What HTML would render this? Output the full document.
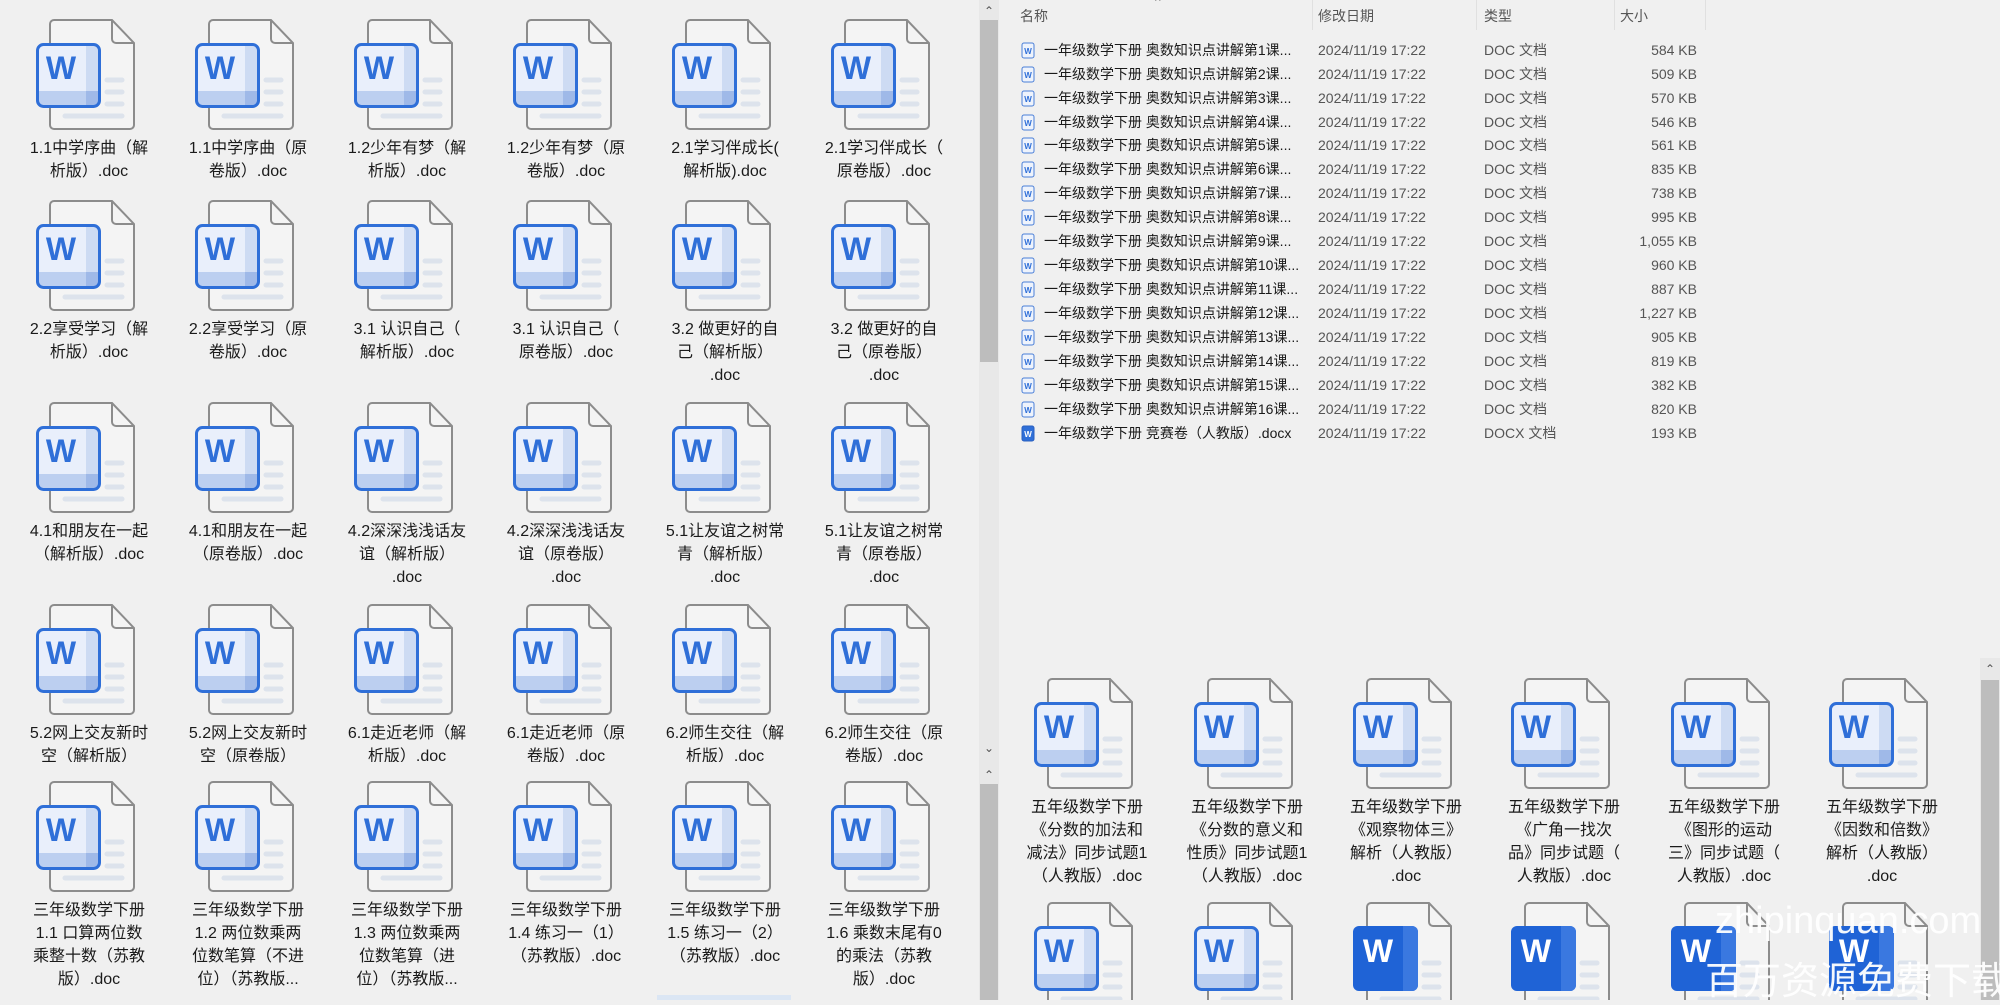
<!DOCTYPE html>
<html><head><meta charset="utf-8">
<style>
*{margin:0;padding:0;box-sizing:border-box}
body{width:2000px;height:1000px;overflow:hidden;background:#f0f0f0;font-family:"Liberation Sans","Noto Sans CJK SC",sans-serif;color:#1a1a1a;position:relative}
.pane{position:absolute;overflow:hidden;background:#f0f0f0}
.it{position:absolute;width:160px}
.it svg{position:absolute;left:27px;top:0}
.lb{position:absolute;top:118px;left:0;width:160px;text-align:center;font-size:16px;line-height:23px;white-space:nowrap;color:#1a1a1a}
.sb{position:absolute;background:#e6e6e6}
.row{position:absolute;left:0;height:24px;font-size:14px;line-height:24px;white-space:nowrap}
.row .n{position:absolute;left:1044px}
.row .d{position:absolute;left:1318px;color:#555}
.row .t{position:absolute;left:1484px;color:#555}
.row .s{position:absolute;right:303px;color:#555}
.row .ic{position:absolute;left:1021px;top:4px}
.wm{position:absolute;color:#fff;font-size:36px;white-space:nowrap;opacity:.95}
</style></head><body>
<svg width="0" height="0" style="position:absolute">
<defs>
<g id="pg">
<path d="M18,1 H76 L98,24 V106 a4,4 0 0 1 -4,4 H18 a4,4 0 0 1 -4,-4 V5 a4,4 0 0 1 4,-4Z" fill="#f4f4f4" stroke="#8c8c8c" stroke-width="2"/>
<path d="M76,1 V20 a4,4 0 0 0 4,4 H98" fill="none" stroke="#8c8c8c" stroke-width="2"/>
<g stroke="#dde3ec" stroke-width="5" stroke-linecap="round"><line x1="71" y1="61" x2="86" y2="61"/><line x1="71" y1="73" x2="86" y2="73"/><line x1="71" y1="85" x2="86" y2="85"/><line x1="29" y1="97" x2="86" y2="97"/></g>
</g>
<g id="bx">
<rect x="1.5" y="25.5" width="62" height="62" rx="6" fill="#e9effb"/>
<path d="M50,26 H58 a5,5 0 0 1 5,5 V72 H50Z" fill="#cddbf3"/>
<path d="M2,72 H63 V82 a5,5 0 0 1 -5,5 H7 a5,5 0 0 1 -5,-5Z" fill="#bccff0"/>
<path d="M50,72 H63 V82 a5,5 0 0 1 -5,5 H50Z" fill="#9fb9e8"/>
<rect x="1.5" y="25.5" width="62" height="62" rx="6" fill="none" stroke="#2f6fd8" stroke-width="3"/>
</g>
<g id="bs">
<rect x="0" y="24" width="65" height="65" rx="6" fill="#1f63d6"/>
<path d="M50,24 H59 a6,6 0 0 1 6,6 V83 a6,6 0 0 1 -6,6 H50Z" fill="#3a78e0"/>
</g>
</defs></svg>

<!-- LEFT TOP PANE -->
<div class="pane" style="left:0;top:0;width:979px;height:762px">
<div class="it" style="left:9px;top:19px"><svg width="100" height="112"><use href="#pg"/><use href="#bx"/><text x="25" y="60" text-anchor="middle" font-family="Liberation Sans" font-weight="bold" font-size="32" fill="#2f6fd8">W</text></svg><div class="lb">1.1中学序曲（解<br>析版）.doc</div></div>
<div class="it" style="left:168px;top:19px"><svg width="100" height="112"><use href="#pg"/><use href="#bx"/><text x="25" y="60" text-anchor="middle" font-family="Liberation Sans" font-weight="bold" font-size="32" fill="#2f6fd8">W</text></svg><div class="lb">1.1中学序曲（原<br>卷版）.doc</div></div>
<div class="it" style="left:327px;top:19px"><svg width="100" height="112"><use href="#pg"/><use href="#bx"/><text x="25" y="60" text-anchor="middle" font-family="Liberation Sans" font-weight="bold" font-size="32" fill="#2f6fd8">W</text></svg><div class="lb">1.2少年有梦（解<br>析版）.doc</div></div>
<div class="it" style="left:486px;top:19px"><svg width="100" height="112"><use href="#pg"/><use href="#bx"/><text x="25" y="60" text-anchor="middle" font-family="Liberation Sans" font-weight="bold" font-size="32" fill="#2f6fd8">W</text></svg><div class="lb">1.2少年有梦（原<br>卷版）.doc</div></div>
<div class="it" style="left:645px;top:19px"><svg width="100" height="112"><use href="#pg"/><use href="#bx"/><text x="25" y="60" text-anchor="middle" font-family="Liberation Sans" font-weight="bold" font-size="32" fill="#2f6fd8">W</text></svg><div class="lb">2.1学习伴成长(<br>解析版).doc</div></div>
<div class="it" style="left:804px;top:19px"><svg width="100" height="112"><use href="#pg"/><use href="#bx"/><text x="25" y="60" text-anchor="middle" font-family="Liberation Sans" font-weight="bold" font-size="32" fill="#2f6fd8">W</text></svg><div class="lb">2.1学习伴成长（<br>原卷版）.doc</div></div>
<div class="it" style="left:9px;top:200px"><svg width="100" height="112"><use href="#pg"/><use href="#bx"/><text x="25" y="60" text-anchor="middle" font-family="Liberation Sans" font-weight="bold" font-size="32" fill="#2f6fd8">W</text></svg><div class="lb">2.2享受学习（解<br>析版）.doc</div></div>
<div class="it" style="left:168px;top:200px"><svg width="100" height="112"><use href="#pg"/><use href="#bx"/><text x="25" y="60" text-anchor="middle" font-family="Liberation Sans" font-weight="bold" font-size="32" fill="#2f6fd8">W</text></svg><div class="lb">2.2享受学习（原<br>卷版）.doc</div></div>
<div class="it" style="left:327px;top:200px"><svg width="100" height="112"><use href="#pg"/><use href="#bx"/><text x="25" y="60" text-anchor="middle" font-family="Liberation Sans" font-weight="bold" font-size="32" fill="#2f6fd8">W</text></svg><div class="lb">3.1 认识自己（<br>解析版）.doc</div></div>
<div class="it" style="left:486px;top:200px"><svg width="100" height="112"><use href="#pg"/><use href="#bx"/><text x="25" y="60" text-anchor="middle" font-family="Liberation Sans" font-weight="bold" font-size="32" fill="#2f6fd8">W</text></svg><div class="lb">3.1 认识自己（<br>原卷版）.doc</div></div>
<div class="it" style="left:645px;top:200px"><svg width="100" height="112"><use href="#pg"/><use href="#bx"/><text x="25" y="60" text-anchor="middle" font-family="Liberation Sans" font-weight="bold" font-size="32" fill="#2f6fd8">W</text></svg><div class="lb">3.2 做更好的自<br>己（解析版）<br>.doc</div></div>
<div class="it" style="left:804px;top:200px"><svg width="100" height="112"><use href="#pg"/><use href="#bx"/><text x="25" y="60" text-anchor="middle" font-family="Liberation Sans" font-weight="bold" font-size="32" fill="#2f6fd8">W</text></svg><div class="lb">3.2 做更好的自<br>己（原卷版）<br>.doc</div></div>
<div class="it" style="left:9px;top:402px"><svg width="100" height="112"><use href="#pg"/><use href="#bx"/><text x="25" y="60" text-anchor="middle" font-family="Liberation Sans" font-weight="bold" font-size="32" fill="#2f6fd8">W</text></svg><div class="lb">4.1和朋友在一起<br>（解析版）.doc</div></div>
<div class="it" style="left:168px;top:402px"><svg width="100" height="112"><use href="#pg"/><use href="#bx"/><text x="25" y="60" text-anchor="middle" font-family="Liberation Sans" font-weight="bold" font-size="32" fill="#2f6fd8">W</text></svg><div class="lb">4.1和朋友在一起<br>（原卷版）.doc</div></div>
<div class="it" style="left:327px;top:402px"><svg width="100" height="112"><use href="#pg"/><use href="#bx"/><text x="25" y="60" text-anchor="middle" font-family="Liberation Sans" font-weight="bold" font-size="32" fill="#2f6fd8">W</text></svg><div class="lb">4.2深深浅浅话友<br>谊（解析版）<br>.doc</div></div>
<div class="it" style="left:486px;top:402px"><svg width="100" height="112"><use href="#pg"/><use href="#bx"/><text x="25" y="60" text-anchor="middle" font-family="Liberation Sans" font-weight="bold" font-size="32" fill="#2f6fd8">W</text></svg><div class="lb">4.2深深浅浅话友<br>谊（原卷版）<br>.doc</div></div>
<div class="it" style="left:645px;top:402px"><svg width="100" height="112"><use href="#pg"/><use href="#bx"/><text x="25" y="60" text-anchor="middle" font-family="Liberation Sans" font-weight="bold" font-size="32" fill="#2f6fd8">W</text></svg><div class="lb">5.1让友谊之树常<br>青（解析版）<br>.doc</div></div>
<div class="it" style="left:804px;top:402px"><svg width="100" height="112"><use href="#pg"/><use href="#bx"/><text x="25" y="60" text-anchor="middle" font-family="Liberation Sans" font-weight="bold" font-size="32" fill="#2f6fd8">W</text></svg><div class="lb">5.1让友谊之树常<br>青（原卷版）<br>.doc</div></div>
<div class="it" style="left:9px;top:604px"><svg width="100" height="112"><use href="#pg"/><use href="#bx"/><text x="25" y="60" text-anchor="middle" font-family="Liberation Sans" font-weight="bold" font-size="32" fill="#2f6fd8">W</text></svg><div class="lb">5.2网上交友新时<br>空（解析版）</div></div>
<div class="it" style="left:168px;top:604px"><svg width="100" height="112"><use href="#pg"/><use href="#bx"/><text x="25" y="60" text-anchor="middle" font-family="Liberation Sans" font-weight="bold" font-size="32" fill="#2f6fd8">W</text></svg><div class="lb">5.2网上交友新时<br>空（原卷版）</div></div>
<div class="it" style="left:327px;top:604px"><svg width="100" height="112"><use href="#pg"/><use href="#bx"/><text x="25" y="60" text-anchor="middle" font-family="Liberation Sans" font-weight="bold" font-size="32" fill="#2f6fd8">W</text></svg><div class="lb">6.1走近老师（解<br>析版）.doc</div></div>
<div class="it" style="left:486px;top:604px"><svg width="100" height="112"><use href="#pg"/><use href="#bx"/><text x="25" y="60" text-anchor="middle" font-family="Liberation Sans" font-weight="bold" font-size="32" fill="#2f6fd8">W</text></svg><div class="lb">6.1走近老师（原<br>卷版）.doc</div></div>
<div class="it" style="left:645px;top:604px"><svg width="100" height="112"><use href="#pg"/><use href="#bx"/><text x="25" y="60" text-anchor="middle" font-family="Liberation Sans" font-weight="bold" font-size="32" fill="#2f6fd8">W</text></svg><div class="lb">6.2师生交往（解<br>析版）.doc</div></div>
<div class="it" style="left:804px;top:604px"><svg width="100" height="112"><use href="#pg"/><use href="#bx"/><text x="25" y="60" text-anchor="middle" font-family="Liberation Sans" font-weight="bold" font-size="32" fill="#2f6fd8">W</text></svg><div class="lb">6.2师生交往（原<br>卷版）.doc</div></div>
</div>

<!-- LEFT BOTTOM PANE -->
<div class="pane" style="left:0;top:762px;width:979px;height:238px">
<div class="it" style="left:9px;top:19px"><svg width="100" height="112"><use href="#pg"/><use href="#bx"/><text x="25" y="60" text-anchor="middle" font-family="Liberation Sans" font-weight="bold" font-size="32" fill="#2f6fd8">W</text></svg><div class="lb">三年级数学下册<br>1.1 口算两位数<br>乘整十数（苏教<br>版）.doc</div></div>
<div class="it" style="left:168px;top:19px"><svg width="100" height="112"><use href="#pg"/><use href="#bx"/><text x="25" y="60" text-anchor="middle" font-family="Liberation Sans" font-weight="bold" font-size="32" fill="#2f6fd8">W</text></svg><div class="lb">三年级数学下册<br>1.2 两位数乘两<br>位数笔算（不进<br>位）（苏教版...</div></div>
<div class="it" style="left:327px;top:19px"><svg width="100" height="112"><use href="#pg"/><use href="#bx"/><text x="25" y="60" text-anchor="middle" font-family="Liberation Sans" font-weight="bold" font-size="32" fill="#2f6fd8">W</text></svg><div class="lb">三年级数学下册<br>1.3 两位数乘两<br>位数笔算（进<br>位）（苏教版...</div></div>
<div class="it" style="left:486px;top:19px"><svg width="100" height="112"><use href="#pg"/><use href="#bx"/><text x="25" y="60" text-anchor="middle" font-family="Liberation Sans" font-weight="bold" font-size="32" fill="#2f6fd8">W</text></svg><div class="lb">三年级数学下册<br>1.4 练习一（1）<br>（苏教版）.doc</div></div>
<div class="it" style="left:645px;top:19px"><svg width="100" height="112"><use href="#pg"/><use href="#bx"/><text x="25" y="60" text-anchor="middle" font-family="Liberation Sans" font-weight="bold" font-size="32" fill="#2f6fd8">W</text></svg><div class="lb">三年级数学下册<br>1.5 练习一（2）<br>（苏教版）.doc</div></div>
<div class="it" style="left:804px;top:19px"><svg width="100" height="112"><use href="#pg"/><use href="#bx"/><text x="25" y="60" text-anchor="middle" font-family="Liberation Sans" font-weight="bold" font-size="32" fill="#2f6fd8">W</text></svg><div class="lb">三年级数学下册<br>1.6 乘数末尾有0<br>的乘法（苏教<br>版）.doc</div></div>
<div style="position:absolute;left:657px;top:233px;width:134px;height:5px;background:#dbe6f4"></div>
</div>

<!-- LEFT SCROLLBARS -->
<div class="sb" style="left:979px;top:0;width:20px;height:762px;background:#e8e8e8">
 <div style="position:absolute;left:0;top:0;width:20px;height:20px;text-align:center;font-size:12px;line-height:22px;color:#555">&#8963;</div>
 <div style="position:absolute;left:1px;top:20px;width:18px;height:342px;background:#bdbdbd"></div>
 <div style="position:absolute;left:0;top:740px;width:20px;height:20px;text-align:center;font-size:12px;line-height:16px;color:#555">&#8964;</div>
</div>
<div class="sb" style="left:979px;top:762px;width:20px;height:238px;background:#e8e8e8">
 <div style="position:absolute;left:0;top:2px;width:20px;height:20px;text-align:center;font-size:12px;line-height:22px;color:#555">&#8963;</div>
 <div style="position:absolute;left:1px;top:22px;width:18px;height:216px;background:#bdbdbd"></div>
</div>

<!-- RIGHT LIST PANE -->
<div class="pane" style="left:1000px;top:0;width:1000px;height:658px">
 <div style="position:absolute;left:0;top:0;width:1000px;height:32px;font-size:14px;color:#555">
  <span style="position:absolute;left:20px;top:6px">名称</span>
  <span style="position:absolute;left:155px;top:-6px;font-size:12px;color:#888">^</span>
  <span style="position:absolute;left:318px;top:6px">修改日期</span>
  <span style="position:absolute;left:484px;top:6px">类型</span>
  <span style="position:absolute;left:620px;top:6px">大小</span>
  <div style="position:absolute;left:312px;top:0;width:1px;height:30px;background:#e0e0e0"></div>
  <div style="position:absolute;left:476px;top:0;width:1px;height:30px;background:#e0e0e0"></div>
  <div style="position:absolute;left:614px;top:0;width:1px;height:30px;background:#e0e0e0"></div>
  <div style="position:absolute;left:705px;top:0;width:1px;height:30px;background:#e0e0e0"></div>
 </div>
</div>
<div style="position:absolute;left:0;top:0;width:2000px;height:460px">
<div class="row" style="top:38px;width:2000px"><svg class="ic" width="14" height="17"><rect x="1" y="1" width="12" height="15" rx="2" fill="#eef3fc" stroke="#4a7fd8"/><text x="7" y="12" text-anchor="middle" font-size="8" font-weight="bold" fill="#2f6fd8" font-family="Liberation Sans">W</text></svg><span class="n">一年级数学下册  奥数知识点讲解第1课...</span><span class="d">2024/11/19 17:22</span><span class="t">DOC 文档</span><span class="s">584 KB</span></div>
<div class="row" style="top:62px;width:2000px"><svg class="ic" width="14" height="17"><rect x="1" y="1" width="12" height="15" rx="2" fill="#eef3fc" stroke="#4a7fd8"/><text x="7" y="12" text-anchor="middle" font-size="8" font-weight="bold" fill="#2f6fd8" font-family="Liberation Sans">W</text></svg><span class="n">一年级数学下册  奥数知识点讲解第2课...</span><span class="d">2024/11/19 17:22</span><span class="t">DOC 文档</span><span class="s">509 KB</span></div>
<div class="row" style="top:86px;width:2000px"><svg class="ic" width="14" height="17"><rect x="1" y="1" width="12" height="15" rx="2" fill="#eef3fc" stroke="#4a7fd8"/><text x="7" y="12" text-anchor="middle" font-size="8" font-weight="bold" fill="#2f6fd8" font-family="Liberation Sans">W</text></svg><span class="n">一年级数学下册  奥数知识点讲解第3课...</span><span class="d">2024/11/19 17:22</span><span class="t">DOC 文档</span><span class="s">570 KB</span></div>
<div class="row" style="top:110px;width:2000px"><svg class="ic" width="14" height="17"><rect x="1" y="1" width="12" height="15" rx="2" fill="#eef3fc" stroke="#4a7fd8"/><text x="7" y="12" text-anchor="middle" font-size="8" font-weight="bold" fill="#2f6fd8" font-family="Liberation Sans">W</text></svg><span class="n">一年级数学下册  奥数知识点讲解第4课...</span><span class="d">2024/11/19 17:22</span><span class="t">DOC 文档</span><span class="s">546 KB</span></div>
<div class="row" style="top:133px;width:2000px"><svg class="ic" width="14" height="17"><rect x="1" y="1" width="12" height="15" rx="2" fill="#eef3fc" stroke="#4a7fd8"/><text x="7" y="12" text-anchor="middle" font-size="8" font-weight="bold" fill="#2f6fd8" font-family="Liberation Sans">W</text></svg><span class="n">一年级数学下册  奥数知识点讲解第5课...</span><span class="d">2024/11/19 17:22</span><span class="t">DOC 文档</span><span class="s">561 KB</span></div>
<div class="row" style="top:157px;width:2000px"><svg class="ic" width="14" height="17"><rect x="1" y="1" width="12" height="15" rx="2" fill="#eef3fc" stroke="#4a7fd8"/><text x="7" y="12" text-anchor="middle" font-size="8" font-weight="bold" fill="#2f6fd8" font-family="Liberation Sans">W</text></svg><span class="n">一年级数学下册  奥数知识点讲解第6课...</span><span class="d">2024/11/19 17:22</span><span class="t">DOC 文档</span><span class="s">835 KB</span></div>
<div class="row" style="top:181px;width:2000px"><svg class="ic" width="14" height="17"><rect x="1" y="1" width="12" height="15" rx="2" fill="#eef3fc" stroke="#4a7fd8"/><text x="7" y="12" text-anchor="middle" font-size="8" font-weight="bold" fill="#2f6fd8" font-family="Liberation Sans">W</text></svg><span class="n">一年级数学下册  奥数知识点讲解第7课...</span><span class="d">2024/11/19 17:22</span><span class="t">DOC 文档</span><span class="s">738 KB</span></div>
<div class="row" style="top:205px;width:2000px"><svg class="ic" width="14" height="17"><rect x="1" y="1" width="12" height="15" rx="2" fill="#eef3fc" stroke="#4a7fd8"/><text x="7" y="12" text-anchor="middle" font-size="8" font-weight="bold" fill="#2f6fd8" font-family="Liberation Sans">W</text></svg><span class="n">一年级数学下册  奥数知识点讲解第8课...</span><span class="d">2024/11/19 17:22</span><span class="t">DOC 文档</span><span class="s">995 KB</span></div>
<div class="row" style="top:229px;width:2000px"><svg class="ic" width="14" height="17"><rect x="1" y="1" width="12" height="15" rx="2" fill="#eef3fc" stroke="#4a7fd8"/><text x="7" y="12" text-anchor="middle" font-size="8" font-weight="bold" fill="#2f6fd8" font-family="Liberation Sans">W</text></svg><span class="n">一年级数学下册  奥数知识点讲解第9课...</span><span class="d">2024/11/19 17:22</span><span class="t">DOC 文档</span><span class="s">1,055 KB</span></div>
<div class="row" style="top:253px;width:2000px"><svg class="ic" width="14" height="17"><rect x="1" y="1" width="12" height="15" rx="2" fill="#eef3fc" stroke="#4a7fd8"/><text x="7" y="12" text-anchor="middle" font-size="8" font-weight="bold" fill="#2f6fd8" font-family="Liberation Sans">W</text></svg><span class="n">一年级数学下册  奥数知识点讲解第10课...</span><span class="d">2024/11/19 17:22</span><span class="t">DOC 文档</span><span class="s">960 KB</span></div>
<div class="row" style="top:277px;width:2000px"><svg class="ic" width="14" height="17"><rect x="1" y="1" width="12" height="15" rx="2" fill="#eef3fc" stroke="#4a7fd8"/><text x="7" y="12" text-anchor="middle" font-size="8" font-weight="bold" fill="#2f6fd8" font-family="Liberation Sans">W</text></svg><span class="n">一年级数学下册  奥数知识点讲解第11课...</span><span class="d">2024/11/19 17:22</span><span class="t">DOC 文档</span><span class="s">887 KB</span></div>
<div class="row" style="top:301px;width:2000px"><svg class="ic" width="14" height="17"><rect x="1" y="1" width="12" height="15" rx="2" fill="#eef3fc" stroke="#4a7fd8"/><text x="7" y="12" text-anchor="middle" font-size="8" font-weight="bold" fill="#2f6fd8" font-family="Liberation Sans">W</text></svg><span class="n">一年级数学下册  奥数知识点讲解第12课...</span><span class="d">2024/11/19 17:22</span><span class="t">DOC 文档</span><span class="s">1,227 KB</span></div>
<div class="row" style="top:325px;width:2000px"><svg class="ic" width="14" height="17"><rect x="1" y="1" width="12" height="15" rx="2" fill="#eef3fc" stroke="#4a7fd8"/><text x="7" y="12" text-anchor="middle" font-size="8" font-weight="bold" fill="#2f6fd8" font-family="Liberation Sans">W</text></svg><span class="n">一年级数学下册  奥数知识点讲解第13课...</span><span class="d">2024/11/19 17:22</span><span class="t">DOC 文档</span><span class="s">905 KB</span></div>
<div class="row" style="top:349px;width:2000px"><svg class="ic" width="14" height="17"><rect x="1" y="1" width="12" height="15" rx="2" fill="#eef3fc" stroke="#4a7fd8"/><text x="7" y="12" text-anchor="middle" font-size="8" font-weight="bold" fill="#2f6fd8" font-family="Liberation Sans">W</text></svg><span class="n">一年级数学下册  奥数知识点讲解第14课...</span><span class="d">2024/11/19 17:22</span><span class="t">DOC 文档</span><span class="s">819 KB</span></div>
<div class="row" style="top:373px;width:2000px"><svg class="ic" width="14" height="17"><rect x="1" y="1" width="12" height="15" rx="2" fill="#eef3fc" stroke="#4a7fd8"/><text x="7" y="12" text-anchor="middle" font-size="8" font-weight="bold" fill="#2f6fd8" font-family="Liberation Sans">W</text></svg><span class="n">一年级数学下册  奥数知识点讲解第15课...</span><span class="d">2024/11/19 17:22</span><span class="t">DOC 文档</span><span class="s">382 KB</span></div>
<div class="row" style="top:397px;width:2000px"><svg class="ic" width="14" height="17"><rect x="1" y="1" width="12" height="15" rx="2" fill="#eef3fc" stroke="#4a7fd8"/><text x="7" y="12" text-anchor="middle" font-size="8" font-weight="bold" fill="#2f6fd8" font-family="Liberation Sans">W</text></svg><span class="n">一年级数学下册  奥数知识点讲解第16课...</span><span class="d">2024/11/19 17:22</span><span class="t">DOC 文档</span><span class="s">820 KB</span></div>
<div class="row" style="top:421px;width:2000px"><svg class="ic" width="14" height="17"><rect x="1" y="1" width="12" height="15" rx="2" fill="#2f6fd8" stroke="#2a60c0"/><text x="7" y="12" text-anchor="middle" font-size="8" font-weight="bold" fill="#fff" font-family="Liberation Sans">W</text></svg><span class="n">一年级数学下册  竞赛卷（人教版）.docx</span><span class="d">2024/11/19 17:22</span><span class="t">DOCX 文档</span><span class="s">193 KB</span></div>
</div>

<!-- RIGHT BOTTOM PANE -->
<div class="pane" style="left:1000px;top:658px;width:980px;height:342px">
<div class="it" style="left:7px;top:20px"><svg width="100" height="112"><use href="#pg"/><use href="#bx"/><text x="25" y="60" text-anchor="middle" font-family="Liberation Sans" font-weight="bold" font-size="32" fill="#2f6fd8">W</text></svg><div class="lb">五年级数学下册<br>《分数的加法和<br>减法》同步试题1<br>（人教版）.doc</div></div>
<div class="it" style="left:167px;top:20px"><svg width="100" height="112"><use href="#pg"/><use href="#bx"/><text x="25" y="60" text-anchor="middle" font-family="Liberation Sans" font-weight="bold" font-size="32" fill="#2f6fd8">W</text></svg><div class="lb">五年级数学下册<br>《分数的意义和<br>性质》同步试题1<br>（人教版）.doc</div></div>
<div class="it" style="left:326px;top:20px"><svg width="100" height="112"><use href="#pg"/><use href="#bx"/><text x="25" y="60" text-anchor="middle" font-family="Liberation Sans" font-weight="bold" font-size="32" fill="#2f6fd8">W</text></svg><div class="lb">五年级数学下册<br>《观察物体三》<br>解析（人教版）<br>.doc</div></div>
<div class="it" style="left:484px;top:20px"><svg width="100" height="112"><use href="#pg"/><use href="#bx"/><text x="25" y="60" text-anchor="middle" font-family="Liberation Sans" font-weight="bold" font-size="32" fill="#2f6fd8">W</text></svg><div class="lb">五年级数学下册<br>《广角一找次<br>品》同步试题（<br>人教版）.doc</div></div>
<div class="it" style="left:644px;top:20px"><svg width="100" height="112"><use href="#pg"/><use href="#bx"/><text x="25" y="60" text-anchor="middle" font-family="Liberation Sans" font-weight="bold" font-size="32" fill="#2f6fd8">W</text></svg><div class="lb">五年级数学下册<br>《图形的运动<br>三》同步试题（<br>人教版）.doc</div></div>
<div class="it" style="left:802px;top:20px"><svg width="100" height="112"><use href="#pg"/><use href="#bx"/><text x="25" y="60" text-anchor="middle" font-family="Liberation Sans" font-weight="bold" font-size="32" fill="#2f6fd8">W</text></svg><div class="lb">五年级数学下册<br>《因数和倍数》<br>解析（人教版）<br>.doc</div></div>
<div class="it" style="left:7px;top:244px"><svg width="100" height="112"><use href="#pg"/><use href="#bx"/><text x="25" y="60" text-anchor="middle" font-family="Liberation Sans" font-weight="bold" font-size="32" fill="#2f6fd8">W</text></svg></div>
<div class="it" style="left:167px;top:244px"><svg width="100" height="112"><use href="#pg"/><use href="#bx"/><text x="25" y="60" text-anchor="middle" font-family="Liberation Sans" font-weight="bold" font-size="32" fill="#2f6fd8">W</text></svg></div>
<div class="it" style="left:326px;top:244px"><svg width="100" height="112"><use href="#pg"/><use href="#bs"/><text x="25" y="60" text-anchor="middle" font-family="Liberation Sans" font-weight="bold" font-size="32" fill="#fff">W</text></svg></div>
<div class="it" style="left:484px;top:244px"><svg width="100" height="112"><use href="#pg"/><use href="#bs"/><text x="25" y="60" text-anchor="middle" font-family="Liberation Sans" font-weight="bold" font-size="32" fill="#fff">W</text></svg></div>
<div class="it" style="left:644px;top:244px"><svg width="100" height="112"><use href="#pg"/><use href="#bs"/><text x="25" y="60" text-anchor="middle" font-family="Liberation Sans" font-weight="bold" font-size="32" fill="#fff">W</text></svg></div>
<div class="it" style="left:802px;top:244px"><svg width="100" height="112"><use href="#pg"/><use href="#bs"/><text x="25" y="60" text-anchor="middle" font-family="Liberation Sans" font-weight="bold" font-size="32" fill="#fff">W</text></svg></div>
</div>
<div class="sb" style="left:1980px;top:658px;width:20px;height:342px;background:#e8e8e8">
 <div style="position:absolute;left:0;top:0;width:20px;height:20px;text-align:center;font-size:12px;line-height:22px;color:#555">&#8963;</div>
 <div style="position:absolute;left:1px;top:22px;width:18px;height:320px;background:#bdbdbd"></div>
</div>

<div class="wm" style="left:1715px;top:900px;font-size:38px">zhipinquan.com</div>
<div class="wm" style="left:1705px;top:950px;font-size:38px;font-family:'Noto Sans CJK SC',sans-serif">百万资源免费下载</div>
</body></html>
